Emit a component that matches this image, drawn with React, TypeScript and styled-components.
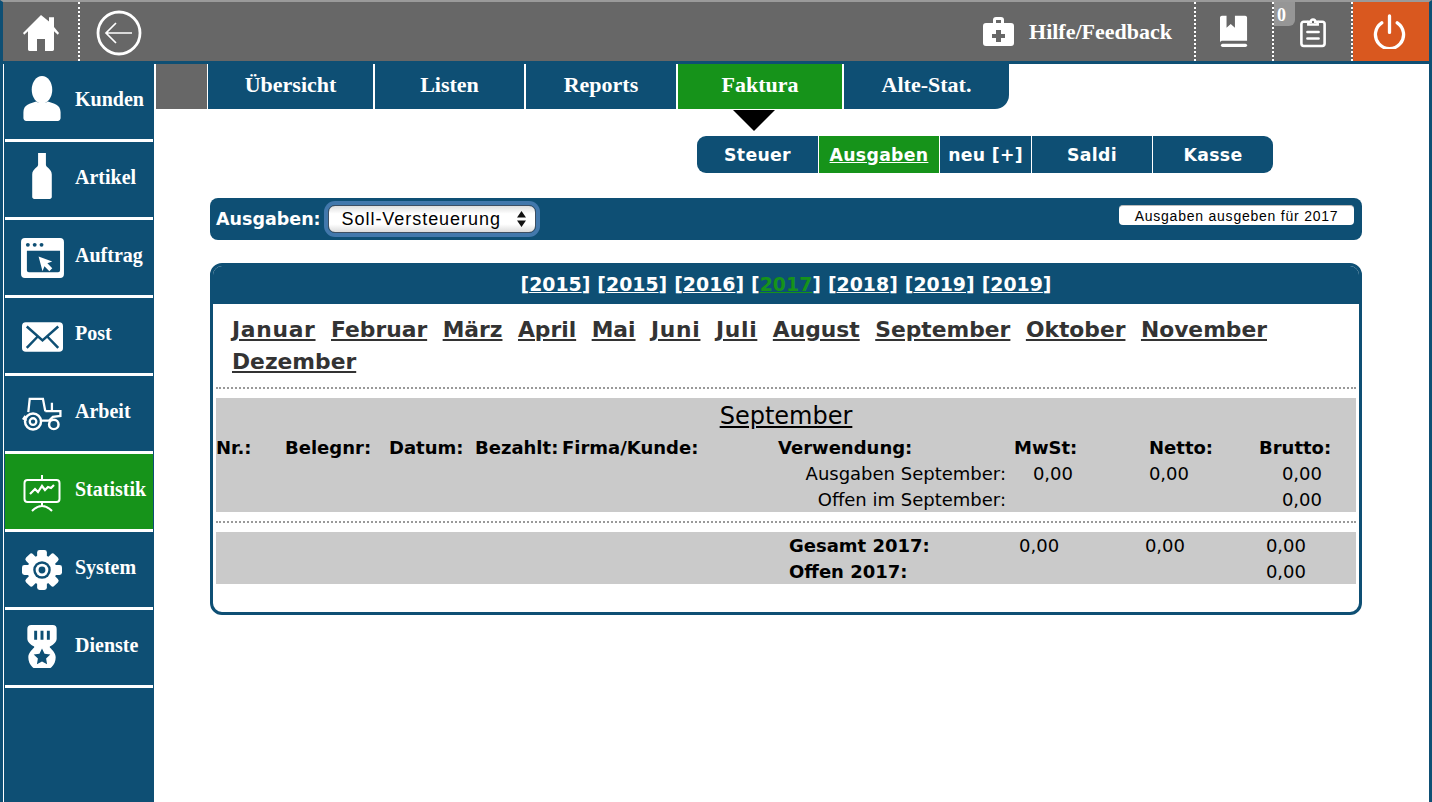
import React from 'react';
import styled, { createGlobalStyle } from 'styled-components';

const navy = '#0e4f74';
const green = '#16931a';
const grey = '#676767';

const Global = createGlobalStyle`
  html, body {
    margin: 0;
    padding: 0;
    background: #fff;
    overflow: hidden;
  }
  a { cursor: pointer; }
`;

const Page = styled.div`
  width: 1432px;
  height: 802px;
  display: flex;
  flex-direction: column;
  box-sizing: border-box;
  border-top: 2px solid #9a9a9a;
  border-left: 3px solid ${navy};
  border-right: 3px solid ${navy};
  overflow: hidden;
`;

const TopBar = styled.header`
  height: 59px;
  flex: none;
  display: flex;
  align-items: stretch;
  background: ${grey};
  border-bottom: 3px solid ${navy};
`;

const TopCell = styled.div<{ $w: number; $bg?: string; $plain?: boolean; $down?: number }>`
  width: ${p => p.$w}px;
  flex: none;
  display: flex;
  align-items: center;
  justify-content: center;
  position: relative;
  background: ${p => p.$bg || 'transparent'};
  border-right: ${p => (p.$plain ? '0' : '2px dotted #fff')};
  padding-top: ${p => p.$down || 0}px;
  box-sizing: border-box;
`;

const PowerCell = styled(TopCell)`
  padding-right: 4px;
`;

const Spacer = styled.div`
  flex: 1;
`;

const HelpLink = styled.div`
  display: flex;
  align-items: center;
  gap: 15px;
  flex: none;
  padding-right: 22px;
  border-right: 2px dotted #fff;
  color: #fff;
  font: bold 22px 'Liberation Serif', serif;
`;

const Badge = styled.span`
  position: absolute;
  left: 0;
  top: 0;
  width: 21px;
  height: 24px;
  background: #969696;
  border-bottom-right-radius: 6px;
  color: #fff;
  font: bold 18px/26px 'Liberation Serif', serif;
  padding-left: 3px;
  box-sizing: border-box;
`;

const Body = styled.div`
  flex: 1;
  display: flex;
  min-height: 0;
`;

const Sidebar = styled.nav`
  width: 151px;
  flex: none;
  background: ${navy};
  border-left: 1px solid #fff;
  box-sizing: border-box;
  padding: 0 1px;
`;

const SideItem = styled.a<{ $active?: boolean }>`
  height: 75px;
  margin-bottom: 3px;
  display: grid;
  grid-template-columns: 70px 1fr;
  align-items: center;
  background: ${p => (p.$active ? green : navy)};
  box-shadow: 0 3px 0 #fff;
  color: #fff;
  font: bold 20px 'Liberation Serif', serif;
`;

const SideIcon = styled.span<{ $dy: number }>`
  display: flex;
  justify-content: center;
  padding-left: 4px;
  box-sizing: border-box;
  margin-top: ${p => p.$dy * 2}px;
`;

const SideLabel = styled.span`
  padding-bottom: 4px;
`;

const Main = styled.main`
  flex: 1;
  min-width: 0;
  display: flex;
  flex-direction: column;
  background: #fff;
`;

const Tabs = styled.div`
  display: flex;
  height: 45px;
  flex: none;
  align-self: flex-start;
  margin-left: 2px;
`;

const TabStub = styled.div`
  width: 51px;
  background: ${grey};
  border-right: 1px solid #fff;
`;

const Tab = styled.a<{ $w: number; $active?: boolean; $last?: boolean }>`
  width: ${p => p.$w}px;
  display: flex;
  align-items: center;
  justify-content: center;
  box-sizing: border-box;
  background: ${p => (p.$active ? green : navy)};
  border-right: ${p => (p.$last ? '0' : '2px solid #fff')};
  border-bottom-right-radius: ${p => (p.$last ? '14px' : '0')};
  color: #fff;
  font: bold 22px 'Liberation Serif', serif;
  padding-bottom: 3px;
`;

const Arrow = styled.div`
  width: 0;
  height: 0;
  margin: 1px 0 0 579px;
  border-left: 21px solid transparent;
  border-right: 21px solid transparent;
  border-top: 21px solid #000;
`;

const SubTabs = styled.div`
  display: flex;
  height: 37px;
  margin: 5px 0 0 543px;
  width: 576px;
  border-radius: 9px;
  overflow: hidden;
  flex: none;
`;

const SubTab = styled.a<{ $w: number; $active?: boolean; $last?: boolean }>`
  width: ${p => p.$w}px;
  display: flex;
  align-items: center;
  justify-content: center;
  box-sizing: border-box;
  padding-top: 1px;
  background: ${p => (p.$active ? green : navy)};
  border-right: ${p => (p.$last ? '0' : '1px solid #fff')};
  color: #fff;
  font: bold 17.3px 'DejaVu Sans', sans-serif;
  letter-spacing: 0.3px;
  text-decoration: ${p => (p.$active ? 'underline' : 'none')};
`;

const FilterBar = styled.div`
  margin: 25px 0 0 56px;
  width: 1152px;
  height: 42px;
  flex: none;
  box-sizing: border-box;
  background: ${navy};
  border-radius: 8px;
  display: flex;
  align-items: center;
  padding: 0 8px 0 6px;
  color: #fff;
  font: bold 17.5px 'DejaVu Sans', sans-serif;
`;

const FakeSelect = styled.div`
  margin-left: 7px;
  width: 208px;
  height: 28px;
  box-sizing: border-box;
  display: flex;
  align-items: center;
  justify-content: space-between;
  padding: 0 9px 0 13px;
  border-radius: 7px;
  border: 1px solid #3d4f63;
  box-shadow: 0 0 0 4px #4278ac;
  background: linear-gradient(#dedede, #fff 30%, #fff 70%, #dcdcdc);
  color: #000;
  font: 18px 'Liberation Sans', sans-serif;
  letter-spacing: 0.95px;
`;

const ExportButton = styled.button`
  margin: 0 0 8px auto;
  width: 235px;
  height: 20px;
  padding: 0;
  border: 0;
  border-top: 1px solid #bbb;
  border-radius: 4px;
  background: #fff;
  color: #000;
  font: 14px 'Liberation Sans', sans-serif;
  letter-spacing: 0.77px;
`;

const Panel = styled.section`
  margin: 23px 0 0 56px;
  width: 1152px;
  height: 352px;
  flex: none;
  box-sizing: border-box;
  border: 3px solid ${navy};
  border-radius: 12px;
  background: #fff;
  overflow: hidden;
`;

const YearBar = styled.div`
  height: 38px;
  background: ${navy};
  color: #fff;
  display: flex;
  align-items: center;
  justify-content: center;
  gap: 7px;
  font: bold 18.9px 'DejaVu Sans', sans-serif;
  padding-bottom: 3px;
  box-sizing: border-box;
`;

const Year = styled.span<{ $current?: boolean }>`
  a {
    color: ${p => (p.$current ? green : '#fff')};
    text-decoration: underline;
  }
`;

const Months = styled.div`
  display: flex;
  flex-wrap: wrap;
  align-content: flex-start;
  column-gap: 15.5px;
  height: 83px;
  padding: 10px 60px 0 19px;
  box-sizing: border-box;
  font: bold 21.8px/32px 'DejaVu Sans', sans-serif;
`;

const Month = styled.a<{ $wide?: boolean }>`
  color: #333;
  text-decoration: underline;
  letter-spacing: ${p => (p.$wide ? '0.7px' : '0')};
`;

const DottedRule = styled.div`
  height: 0;
  margin: 0 3px;
  border-top: 2px dotted #999;
`;

const GreyBlock = styled.div<{ $h: number; $pad?: number }>`
  margin: 9px 3px;
  height: ${p => p.$h}px;
  padding-top: ${p => p.$pad || 0}px;
  box-sizing: border-box;
  background: #cacaca;
  color: #000;
  font: 18px 'DejaVu Sans', sans-serif;
`;

const BlockTitle = styled.div`
  height: 37px;
  text-align: center;
  font: 24px/36px 'DejaVu Sans', sans-serif;
  text-decoration: underline;
`;

const Row = styled.div<{ $cols: string }>`
  height: 26px;
  line-height: 26px;
  display: grid;
  grid-template-columns: ${p => p.$cols};
  white-space: nowrap;
`;

const Cell = styled.span<{ $right?: boolean; $bold?: boolean }>`
  text-align: ${p => (p.$right ? 'right' : 'left')};
  font-weight: ${p => (p.$bold ? 'bold' : 'normal')};
`;

const headCols = '69px 104px 86px 87px 216px 236px 135px 110px 1fr';
const sumCols = '790px 67px 116px 133px 1fr';
const totalCols = '573px 230px 40px 126px 121px';

const gearTeeth = [0, 45, 90, 135, 180, 225, 270, 315];

const icons = {
  home: (
    <svg width="36" height="36" viewBox="1 2 36 33" fill="#fff" preserveAspectRatio="none">
      <path d="M19 2 1 18.500l1.200 1.600L6 17v16.500c0 1 .7 1.500 1.500 1.500H15V24h8v11h7.500c.8 0 1.500-.5 1.500-1.500V17l3.800 3.100 1.200-1.600L32 13V4h-5v4z" />
    </svg>
  ),
  back: (
    <svg width="46" height="46" viewBox="0 0 46 46" fill="none" stroke="#fff">
      <circle cx="23" cy="23" r="21" strokeWidth="2.800" />
      <path d="M36 23H10M20 13 10 23l10 10" strokeWidth="1.700" />
    </svg>
  ),
  kit: (
    <svg width="31" height="31" viewBox="0 0 31 31" fill="#fff">
      <path d="M10 7V4a3 3 0 0 1 3-3h5a3 3 0 0 1 3 3v3h7a3 3 0 0 1 3 3v17a3 3 0 0 1-3 3H3a3 3 0 0 1-3-3V10a3 3 0 0 1 3-3zm3 0h5V4h-5zm0 7v4H9v4h4v4h5v-4h4v-4h-4v-4z" fillRule="evenodd" />
    </svg>
  ),
  book: (
    <svg width="28" height="33" viewBox="0 0 30 34" fill="#fff">
      <path d="M2 0h5v13l4.500-4 4.500 4V0h11c1 0 2 1 2 2v25H3c-1.500 0-3 .5-3 2V2c0-1 1-2 2-2z" />
      <rect x="1" y="30" width="28" height="3.500" rx="1.700" />
    </svg>
  ),
  clipboard: (
    <svg width="26" height="32" viewBox="0 0 28 34" fill="none" stroke="#fff" strokeWidth="2.800">
      <path d="M8 6H4a2.500 2.500 0 0 0-2.500 2.500v21A2.500 2.500 0 0 0 4 32h20a2.500 2.500 0 0 0 2.500-2.500v-21A2.500 2.500 0 0 0 24 6h-4" />
      <path d="M9 9V6h2.500a2.500 2.500 0 0 1 5 0H19v3z" />
      <path d="M8 17h12M8 24h12" strokeLinecap="round" />
    </svg>
  ),
  power: (
    <svg width="33" height="35" viewBox="0 0 34 36" fill="none" stroke="#fff" strokeWidth="3.400" strokeLinecap="round">
      <path d="M17 2v17M9 9a14.500 14.500 0 1 0 16 0" />
    </svg>
  ),
  person: (
    <svg width="38" height="45" viewBox="0 0 38 46" fill="#fff">
      <ellipse cx="19" cy="14" rx="10.500" ry="14" />
      <path d="M13 26C7 28 0 29 0 37v6c0 1.500 1 3 3 3h32c2 0 3-1.500 3-3v-6c0-8-7-9-13-11-3 2-9 2-12 0z" />
    </svg>
  ),
  bottle: (
    <svg width="20" height="46" viewBox="0 0 20 47" fill="#fff">
      <path d="M6 0h8v12c0 3 6 4 6 10v23c0 1-1 2-2 2H2c-1 0-2-1-2-2V22c0-6 6-7 6-10z" />
    </svg>
  ),
  order: (
    <svg width="43" height="40" viewBox="0 0 44 41" fill="#fff">
      <path fillRule="evenodd" d="M4 0h36a4 4 0 0 1 4 4v33a4 4 0 0 1-4 4H4a4 4 0 0 1-4-4V4a4 4 0 0 1 4-4zm2 13v20a2 2 0 0 0 2 2h30a2 2 0 0 0 2-2V13z" />
      <circle cx="7" cy="7" r="2" fill={navy} />
      <circle cx="14" cy="7" r="2" fill={navy} />
      <circle cx="21" cy="7" r="2" fill={navy} />
      <path d="m18 19 14 5-5 2 5 5-3 3-5-5-2 5z" />
    </svg>
  ),
  mail: (
    <svg width="41" height="30" viewBox="0 0 43 31">
      <rect width="43" height="31" rx="4" fill="#fff" />
      <path d="M5 4.500 21.500 19 38 4.500M5 27l11-11.500M38 27 27 15.500" fill="none" stroke={navy} strokeWidth="2.600" />
    </svg>
  ),
  tractor: (
    <svg width="40" height="34" viewBox="0 0 41 36" fill="none" stroke="#fff" strokeWidth="2.400">
      <path d="M6 16 7.500 2h14L24 15M3 20l-2 3 3 2M24 15h7V6M31 15h9v5l-8 1-4 4H20" />
      <circle cx="11" cy="26" r="8.500" strokeWidth="2.600" />
      <circle cx="11" cy="26" r="3.500" />
      <circle cx="33" cy="29" r="5" strokeWidth="2.600" />
    </svg>
  ),
  stats: (
    <svg width="38" height="37" viewBox="0 0 38 37" fill="none" stroke="#fff" strokeWidth="2">
      <rect x="1.500" y="5" width="35" height="22" rx="3" />
      <path d="M19 0v5M19 27v4M9 36c3-3 6-5 10-5s7 2 10 5" />
      <path d="m7 19 5-5 3 3 4-6 3 4 3-3 3 1 3-3" strokeWidth="2.200" />
    </svg>
  ),
  gear: (
    <svg width="40" height="40" viewBox="0 0 41 41" fill="#fff">
      {gearTeeth.map(a => (
        <rect key={a} x="15.500" y="0" width="10" height="12" rx="2.500" transform={`rotate(${a} 20.500 20.500)`} />
      ))}
      <circle cx="20.500" cy="20.500" r="15" />
      <circle cx="20.500" cy="20.500" r="9" fill={navy} />
      <circle cx="20.500" cy="20.500" r="6.500" />
      <circle cx="20.500" cy="20.500" r="3.500" fill={navy} />
    </svg>
  ),
  medal: (
    <svg width="30" height="43" viewBox="0 0 30 44">
      <path
        fill="#fff"
        d="M4 0h22a4 4 0 0 1 4 4v10c0 3-3 6-7 8v1c3 3 6 6 6 10a14 14 0 0 1-28 0c0-4 3-7 6-10v-1c-4-2-7-5-7-8V4a4 4 0 0 1 4-4z"
      />
      <path fill={navy} d="M7 6h3v9H7zM13.500 6h3v9h-3zM20 6h3v9h-3z" />
      <path fill={navy} d="m15 24 2.600 5.400 5.900.8-4.300 4.100 1 5.900-5.200-2.800-5.200 2.800 1-5.900-4.300-4.100 5.900-.8z" />
    </svg>
  ),
};

const sideItems: { label: string; icon: React.ReactNode; dy: number; active?: boolean }[] = [
  { label: 'Kunden', icon: icons.person, dy: -3 },
  { label: 'Artikel', icon: icons.bottle, dy: -3.5 },
  { label: 'Auftrag', icon: icons.order, dy: 0 },
  { label: 'Post', icon: icons.mail, dy: 1.5 },
  { label: 'Arbeit', icon: icons.tractor, dy: 0 },
  { label: 'Statistik', icon: icons.stats, dy: 1.5, active: true },
  { label: 'System', icon: icons.gear, dy: 0 },
  { label: 'Dienste', icon: icons.medal, dy: -1 },
];

const years = ['2015', '2015', '2016', '2017', '2018', '2019', '2019'];
const months = [
  'Januar', 'Februar', 'März', 'April', 'Mai', 'Juni', 'Juli', 'August',
  'September', 'Oktober', 'November', 'Dezember',
];

export default function App() {
  return (
    <Page>
      <Global />
      <TopBar>
        <TopCell $w={77} $down={3}>{icons.home}</TopCell>
        <TopCell $w={78} $plain $down={3}>{icons.back}</TopCell>
        <Spacer />
        <HelpLink>
          {icons.kit}
          <span>Hilfe/Feedback</span>
        </HelpLink>
        <TopCell $w={78}>{icons.book}</TopCell>
        <TopCell $w={79}>
          <Badge>0</Badge>
          {icons.clipboard}
        </TopCell>
        <PowerCell $w={76} $plain $bg="#d9581f">{icons.power}</PowerCell>
      </TopBar>
      <Body>
        <Sidebar>
          {sideItems.map(item => (
            <SideItem key={item.label} $active={item.active}>
              <SideIcon $dy={item.dy}>{item.icon}</SideIcon>
              <SideLabel>{item.label}</SideLabel>
            </SideItem>
          ))}
        </Sidebar>
        <Main>
          <Tabs>
            <TabStub />
            <Tab $w={167}>Übersicht</Tab>
            <Tab $w={151}>Listen</Tab>
            <Tab $w={152}>Reports</Tab>
            <Tab $w={166} $active>Faktura</Tab>
            <Tab $w={165} $last>Alte-Stat.</Tab>
          </Tabs>
          <Arrow />
          <SubTabs>
            <SubTab $w={122}>Steuer</SubTab>
            <SubTab $w={121} $active>Ausgaben</SubTab>
            <SubTab $w={92}>neu [+]</SubTab>
            <SubTab $w={121}>Saldi</SubTab>
            <SubTab $w={120} $last>Kasse</SubTab>
          </SubTabs>
          <FilterBar>
            Ausgaben:
            <FakeSelect>
              Soll-Versteuerung
              <svg width="9" height="16" viewBox="0 0 10 16" fill="#111" preserveAspectRatio="none">
                <path d="M5 0l5 6.500H0zM5 16l5-6.500H0z" />
              </svg>
            </FakeSelect>
            <ExportButton>Ausgaben ausgeben für 2017</ExportButton>
          </FilterBar>
          <Panel>
            <YearBar>
              {years.map((y, i) => (
                <Year key={i} $current={y === '2017'}>
                  [<a>{y}</a>]
                </Year>
              ))}
            </YearBar>
            <Months>
              {months.map(m => (
                <Month key={m} $wide={m.startsWith('J')}>{m}</Month>
              ))}
            </Months>
            <DottedRule />
            <GreyBlock $h={114}>
              <BlockTitle>September</BlockTitle>
              <Row $cols={headCols}>
                <Cell $bold>Nr.:</Cell>
                <Cell $bold>Belegnr:</Cell>
                <Cell $bold>Datum:</Cell>
                <Cell $bold>Bezahlt:</Cell>
                <Cell $bold>Firma/Kunde:</Cell>
                <Cell $bold>Verwendung:</Cell>
                <Cell $bold>MwSt:</Cell>
                <Cell $bold>Netto:</Cell>
                <Cell $bold>Brutto:</Cell>
              </Row>
              <Row $cols={sumCols}>
                <Cell $right>Ausgaben September:</Cell>
                <Cell $right>0,00</Cell>
                <Cell $right>0,00</Cell>
                <Cell $right>0,00</Cell>
              </Row>
              <Row $cols={sumCols}>
                <Cell $right>Offen im September:</Cell>
                <Cell />
                <Cell />
                <Cell $right>0,00</Cell>
              </Row>
            </GreyBlock>
            <DottedRule />
            <GreyBlock $h={52} $pad={1}>
              <Row $cols={totalCols}>
                <Cell />
                <Cell $bold>Gesamt 2017:</Cell>
                <Cell $right>0,00</Cell>
                <Cell $right>0,00</Cell>
                <Cell $right>0,00</Cell>
              </Row>
              <Row $cols={totalCols}>
                <Cell />
                <Cell $bold>Offen 2017:</Cell>
                <Cell />
                <Cell />
                <Cell $right>0,00</Cell>
              </Row>
            </GreyBlock>
          </Panel>
        </Main>
      </Body>
    </Page>
  );
}
